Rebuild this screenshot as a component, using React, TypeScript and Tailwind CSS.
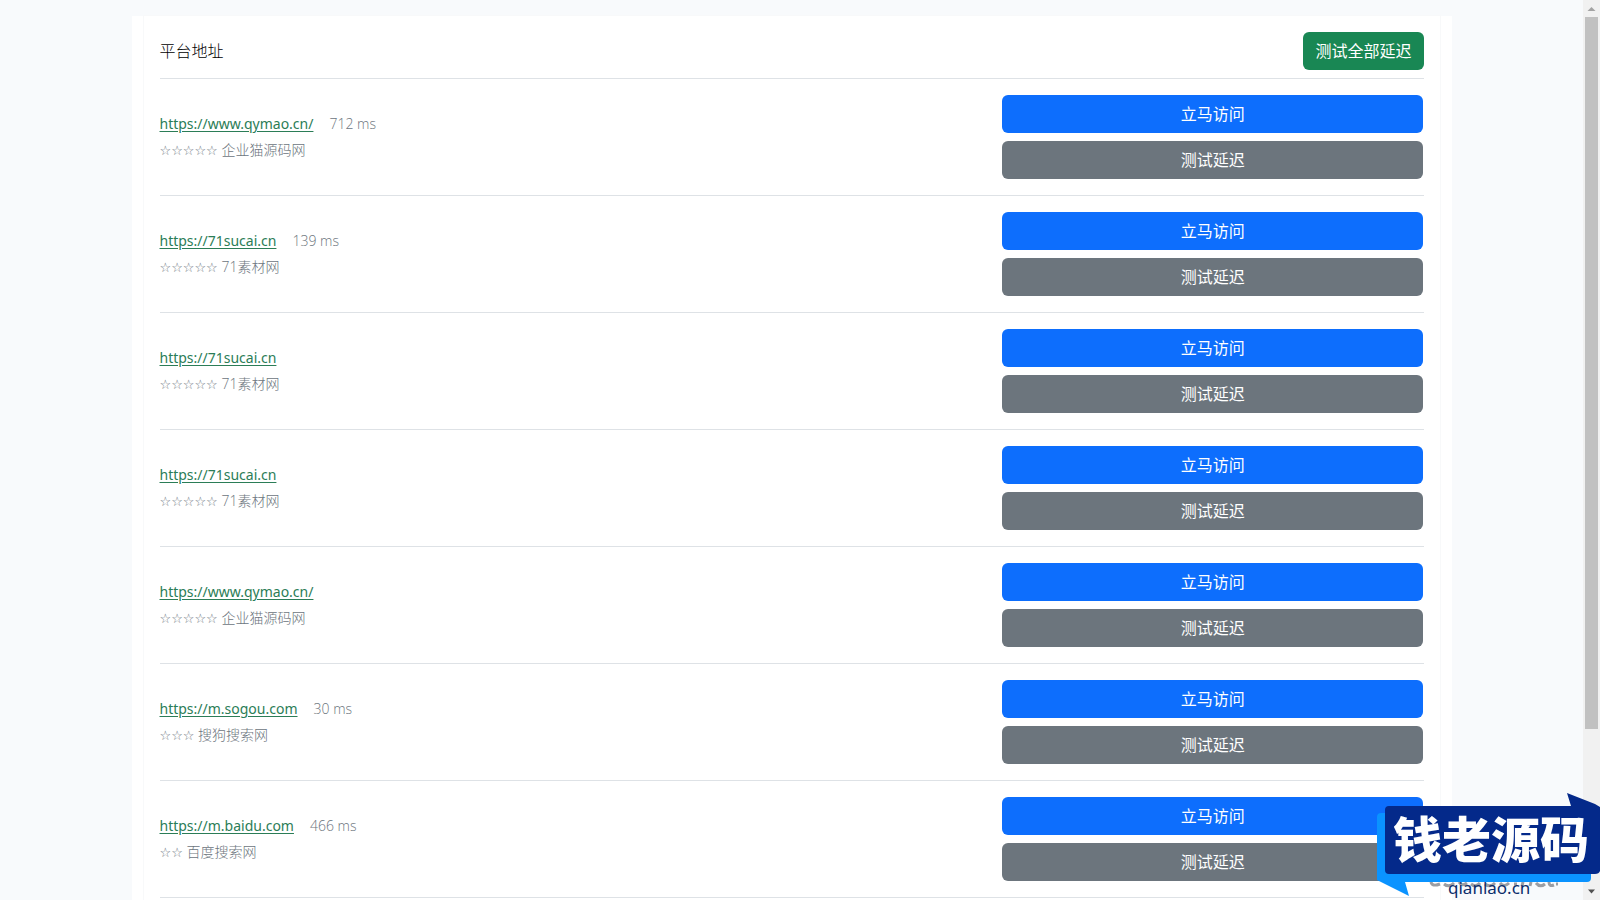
type Site = { url: string; name: string; stars: number; delay?: string };

const sites: Site[] = [
  { url: "https://www.qymao.cn/", name: "企业猫源码网", stars: 5, delay: "712 ms" },
  { url: "https://71sucai.cn", name: "71素材网", stars: 5, delay: "139 ms" },
  { url: "https://71sucai.cn", name: "71素材网", stars: 5 },
  { url: "https://71sucai.cn", name: "71素材网", stars: 5 },
  { url: "https://www.qymao.cn/", name: "企业猫源码网", stars: 5 },
  { url: "https://m.sogou.com", name: "搜狗搜索网", stars: 3, delay: "30 ms" },
  { url: "https://m.baidu.com", name: "百度搜索网", stars: 2, delay: "466 ms" },
];

function SiteRow({ site }: { site: Site }) {
  return (
    <li className="flex items-center border-b border-[#dee2e6] py-4">
      <div className="w-2/3 pt-0.5">
        <div className="flex h-6 items-baseline gap-4 leading-6">
          <a
            href={site.url}
            className="font-['Noto_Sans',sans-serif] text-sm text-[#2b7d57] underline underline-offset-2"
          >
            {site.url}
          </a>
          {site.delay && <span className="text-sm font-light text-[#6c757d]">{site.delay}</span>}
        </div>
        <p className="h-6 text-sm leading-6 font-light text-[#6c757d]">
          <span className="font-['DejaVu_Sans',sans-serif] text-[13px] font-normal">{"☆".repeat(site.stars)}</span>{" "}
          {site.name}
        </p>
      </div>
      <div className="flex w-1/3 flex-col gap-2">
        <button type="button" className="h-[38px] rounded-md bg-[#0d6efd] text-white">
          立马访问
        </button>
        <button type="button" className="h-[38px] rounded-md bg-[#6c757d] text-white">
          测试延迟
        </button>
      </div>
    </li>
  );
}

function Scrollbar() {
  return (
    <div aria-hidden="true" className="flex w-[17px] shrink-0 flex-col items-center bg-[#f1f1f1]">
      <svg viewBox="0 0 17 17" className="h-[17px] w-[17px] shrink-0">
        <path d="M4.500 11 8.500 7l4 4z" fill="#a3a3a3" />
      </svg>
      <div className="h-[712px] w-[13px] bg-[#c1c1c1]" />
      <svg viewBox="0 0 17 17" className="mt-auto h-[17px] w-[17px] shrink-0">
        <path d="M5 6.500h7l-3.500 4z" fill="#505050" />
      </svg>
    </div>
  );
}

function Watermark() {
  return (
    <div className="pointer-events-none absolute right-0 bottom-0 h-[108px] w-[224px]">
      <svg viewBox="0 0 224 108" className="absolute inset-0 h-full w-full">
        <path
          d="M55 90q1 5 9 2M68 92q5 4 10-1M83 90q3 5 8 1M95 92q5 4 9-1M109 92q5 4 10-1M124 91q4 5 9 0M138 92h3M146 94l1-4M154 94l1-4M160 91q4 5 9 1M173 90q0 5 5 3M182 92h-2"
          fill="none"
          stroke="#9a9da3"
          strokeWidth="3"
        />
        <path d="M5 21h206q4 0 4 4v61q0 4-4 4H29l4 14-32-16V25q0-4 4-4z" fill="#0a93ff" />
        <path d="M13 14h182L191 1l28 11 5 3v64q-1 3-5 3H13q-4 0-4-4V18q0-4 4-4z" fill="#04298a" />
      </svg>
      <p className="absolute top-[22px] left-[17px] text-[49px] leading-[50px] font-black whitespace-nowrap text-white">
        钱老源码
      </p>
      <p className="absolute bottom-0.5 left-[72px] font-['Noto_Sans',sans-serif] text-[17px] leading-5 text-[#0b2d6b]">
        qianlao.cn
      </p>
    </div>
  );
}

export default function App() {
  return (
    <div className="relative flex h-screen overflow-hidden bg-[#f8fafc] font-['Open_Sans','Noto_Sans_CJK_SC',sans-serif] text-[#212529]">
      <div className="min-w-0 flex-1 overflow-hidden pt-4">
        <main className="mx-auto min-h-full max-w-[1320px] bg-white px-3">
          <div className="min-h-screen px-4 pt-4 shadow-[0_0_0_1px_#f8f9fa]">
            <header className="flex items-center justify-between border-b border-[#dee2e6] pb-2">
              <h1 className="text-base font-light text-black">平台地址</h1>
              <button type="button" className="h-[38px] rounded-md bg-[#198754] px-3 text-white">
                测试全部延迟
              </button>
            </header>
            <ul>
              {sites.map((site, i) => (
                <SiteRow key={i} site={site} />
              ))}
            </ul>
          </div>
        </main>
      </div>
      <Scrollbar />
      <Watermark />
    </div>
  );
}
